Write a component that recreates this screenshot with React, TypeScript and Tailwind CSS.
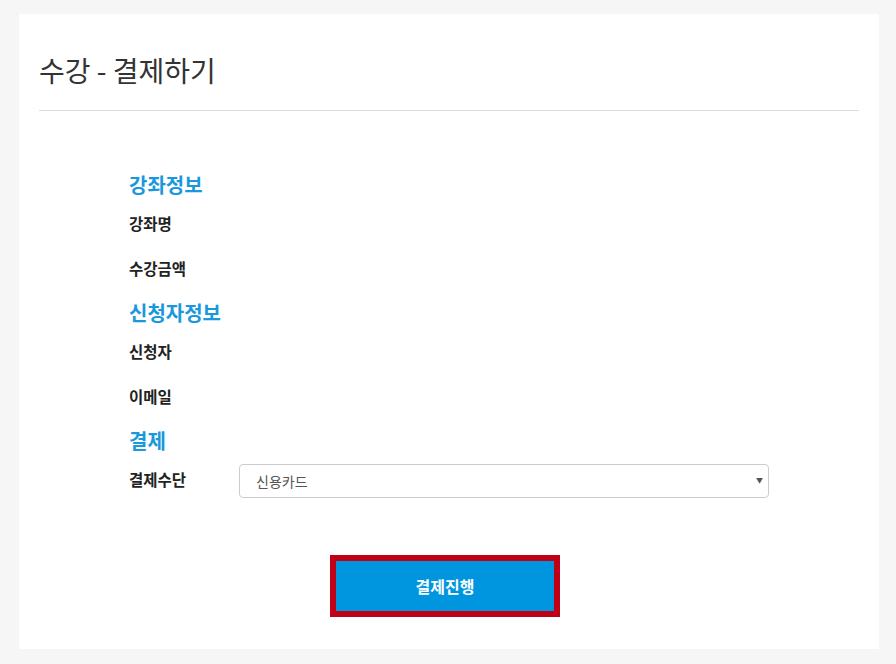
import React from 'react'

const font = { fontFamily: '"Noto Sans CJK KR", "Noto Sans", sans-serif' }

const Heading: React.FC<{ children: React.ReactNode }> = ({ children }) => (
    <h3 className="h-[30px] leading-[30px] text-[20px] font-bold text-[#1a98dc] mb-[8px]">{children}</h3>
)

const Row: React.FC<{ label: string; children?: React.ReactNode }> = ({ label, children }) => (
    <div className="flex items-start mb-[15px]">
        <div className="w-[110px] h-[30px] leading-[30px] text-[15.5px] font-bold text-[#222]">{label}</div>
        {children}
    </div>
)

const App: React.FC = () => {
    return (
        <div className="min-h-screen bg-[#f6f6f6] pt-[14px] pl-[19px]" style={font}>
            <div className="w-[860px] h-[635px] bg-white px-[20px] pt-[36px]">
                <h1 className="h-[40px] leading-[40px] text-[28px] text-[#333]">수강 - 결제하기</h1>
                <div className="mt-[20px] h-px bg-[#ddd]" />

                <div className="pl-[90px] pt-[59px]">
                    <Heading>강좌정보</Heading>
                    <Row label="강좌명" />
                    <Row label="수강금액" />

                    <Heading>신청자정보</Heading>
                    <Row label="신청자" />
                    <Row label="이메일" />

                    <Heading>결제</Heading>
                    <div className="flex items-start">
                        <div className="w-[110px] h-[30px] leading-[30px] text-[15.5px] font-bold text-[#222]">결제수단</div>
                        <div className="relative w-[530px]">
                            <select className="appearance-none w-full h-[34px] border border-[#ccc] rounded-[4px] pl-[16px] text-[14px] text-[#555] bg-white outline-none">
                                <option>신용카드</option>
                            </select>
                            <span className="absolute right-[6px] top-[11px] text-[7px] text-[#555] pointer-events-none">▼</span>
                        </div>
                    </div>

                    <div className="mt-[57px] ml-[201px]">
                        <button className="w-[230px] h-[62px] border-[6px] border-[#bf0016] bg-[#0096df] text-white text-[16px] font-bold">
                            결제진행
                        </button>
                    </div>
                </div>
            </div>
        </div>
    )
}

export default App
